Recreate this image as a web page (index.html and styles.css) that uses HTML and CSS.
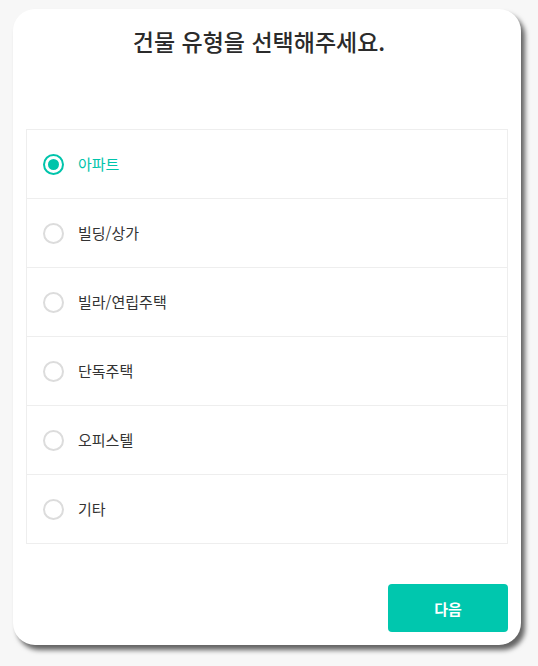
FILE: index.html
```html
<!DOCTYPE html>
<html lang="ko">
<head>
<meta charset="utf-8">
<link rel="stylesheet" href="styles.css">
</head>
<body>
<div class="card">
  <h1 class="title">건물 유형을 선택해주세요.</h1>
  <ul class="options">
    <li class="option selected"><span class="radio"></span><span class="label">아파트</span></li>
    <li class="option"><span class="radio"></span><span class="label">빌딩/상가</span></li>
    <li class="option"><span class="radio"></span><span class="label">빌라/연립주택</span></li>
    <li class="option"><span class="radio"></span><span class="label">단독주택</span></li>
    <li class="option"><span class="radio"></span><span class="label">오피스텔</span></li>
    <li class="option"><span class="radio"></span><span class="label">기타</span></li>
  </ul>
  <div class="footer">
    <button class="next">다음</button>
  </div>
</div>
</body>
</html>
```

FILE: styles.css
```css
* { box-sizing: border-box; }
html, body { margin: 0; padding: 0; }
body {
  background: #f7f7f7;
  font-family: "Noto Sans CJK KR", "Noto Sans", sans-serif;
  color: #333;
  width: 538px;
  height: 666px;
  overflow: hidden;
}
.card {
  margin: 9px 0 0 13px;
  width: 508px;
  height: 636px;
  background: #fff;
  border-radius: 22px;
  box-shadow: 4px 5px 5px rgba(0,0,0,0.6);
  padding: 0 13px;
  display: flex;
  flex-direction: column;
}
.title {
  margin: 0;
  padding: 14px 16px 0 0;
  height: 120px;
  text-align: center;
  font-size: 23px;
  font-weight: 500;
  line-height: 36px;
  color: #2b2b2b;
}
.options {
  list-style: none;
  margin: 0;
  padding: 0;
  border: 1px solid #eeeeee;
}
.option {
  height: 69px;
  display: flex;
  align-items: center;
  padding-left: 16px;
  gap: 14px;
  border-top: 1px solid #eeeeee;
  font-size: 15px;
  color: #333;
}
.option:first-child { border-top: none; height: 68px; }
.label { padding-bottom: 2px; }
.radio {
  width: 21px;
  height: 21px;
  border-radius: 50%;
  border: 2px solid #dcdcdc;
  display: flex;
  align-items: center;
  justify-content: center;
}
.selected .radio {
  border-color: #00c4ab;
}
.selected .radio::after {
  content: "";
  width: 11px;
  height: 11px;
  border-radius: 50%;
  background: #00c4ab;
}
.selected .label { color: #00c4ab; }
.footer {
  display: flex;
  justify-content: flex-end;
  padding-top: 40px;
}
.next {
  width: 120px;
  height: 48px;
  border: none;
  border-radius: 4px;
  background: #00c7ae;
  color: #fff;
  font-family: inherit;
  font-size: 15px;
  font-weight: 700;
}
```
